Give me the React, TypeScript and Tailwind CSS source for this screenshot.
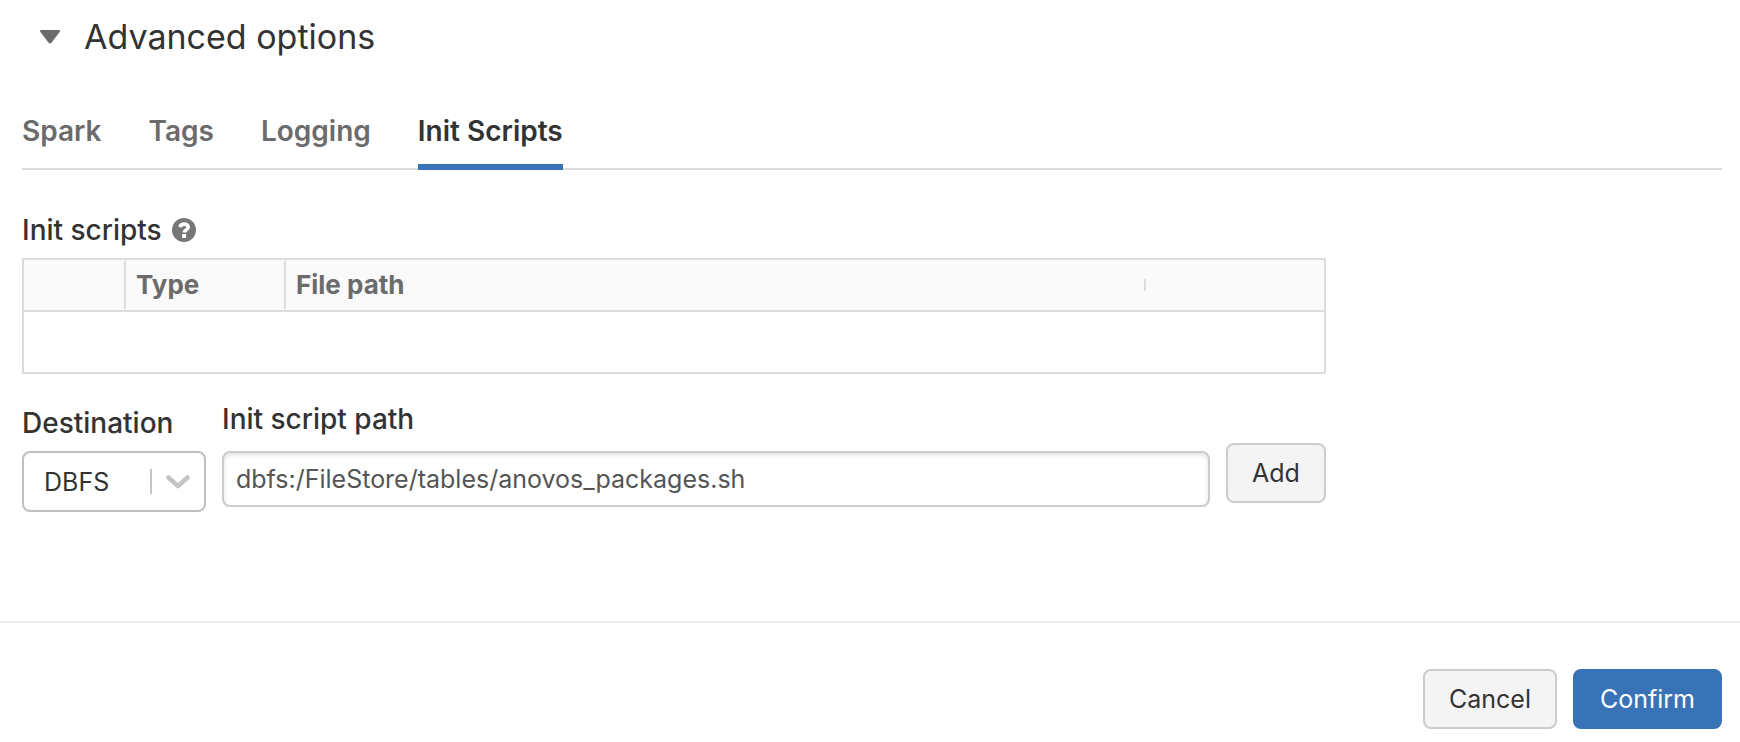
import { useState } from 'react';

const tabs = ['Spark', 'Tags', 'Logging', 'Init Scripts'];

const secondaryButton =
  'h-[60px] rounded-lg border-2 border-[#cccccc] bg-[#f4f4f4] text-[25px] leading-8 text-[#333333]';

function HelpIcon() {
  return (
    <svg viewBox="0 0 24 24" className="size-6" aria-hidden="true">
      <circle cx="12" cy="12" r="12" fill="#777777" />
      <path
        d="M7.800 9C8.600 7.200 10 6.100 12.100 6.100C14.500 6.100 16.200 7.400 16.200 9.200C16.200 11.700 12.500 11.700 12.100 14.600"
        fill="none"
        stroke="#ffffff"
        strokeWidth="3.600"
      />
      <rect x="10.100" y="16" width="4" height="4" fill="#ffffff" />
    </svg>
  );
}

export default function App() {
  const [active, setActive] = useState('Init Scripts');
  const [path, setPath] = useState('dbfs:/FileStore/tables/anovos_packages.sh');

  return (
    <div className="bg-white font-['Inter',sans-serif] text-[#333333]">
      <main className="pr-[18px] pb-[109px] pl-[22px]">
        <h2>
          <button type="button" className="flex items-center gap-6 pt-[17px] pl-[18px] text-[34px] leading-10">
            <svg viewBox="0 0 20 14" className="h-3.5 w-5" aria-hidden="true">
              <path d="M1 0H19Q20.800 .4 19.600 2L11.600 12.500Q10 14.300 8.400 12.500L.4 2Q-.8 .4 1 0Z" fill="#6b6b6b" />
            </svg>
            Advanced options
          </button>
        </h2>

        <div role="tablist" className="mt-[47px] flex gap-[47px] border-b-2 border-[#dddddd]">
          {tabs.map((tab) => (
            <button
              key={tab}
              type="button"
              role="tab"
              aria-selected={tab === active}
              onClick={() => setActive(tab)}
              className={
                tab === active
                  ? '-mb-0.5 h-[66px] border-b-6 border-[#3973b7] pb-1.5 text-[28px] leading-9 font-semibold text-[#333333]'
                  : '-mb-0.5 h-[66px] border-b-6 border-transparent pb-1.5 text-[28px] leading-9 font-semibold text-[#6b6b6b]'
              }
            >
              {tab}
            </button>
          ))}
        </div>

        <section className="max-w-[1304px]">
          <div className="flex items-center gap-2.5 pt-[42px] pb-2.5">
            <h3 className="text-[28px] leading-9 font-medium">Init scripts</h3>
            <HelpIcon />
          </div>

          <table className="w-full table-fixed border-separate border-spacing-0 border-2 border-[#dddddd] text-left text-[26px] leading-8 text-[#6b6b6b]">
            <thead className="bg-[#fafafa]">
              <tr className="h-[52px]">
                <th className="w-[102px] border-b-2 border-[#dddddd] p-0">
                  <div className="h-12 border-r-2 border-[#dddddd]" />
                </th>
                <th className="w-40 border-b-2 border-[#dddddd] p-0">
                  <div className="flex h-12 items-center border-r-2 border-[#dddddd] pl-2.5 font-bold">Type</div>
                </th>
                <th className="border-b-2 border-[#dddddd] p-0">
                  <div className="flex h-12 items-center justify-between pl-2.5 font-bold">
                    File path
                    <span className="h-3 w-0.5 bg-[#dddddd]" />
                  </div>
                </th>
                <th className="w-[178px] border-b-2 border-[#dddddd] p-0" />
              </tr>
            </thead>
            <tbody>
              <tr className="h-[60px]">
                <td colSpan={4} />
              </tr>
            </tbody>
          </table>

          <div className="mt-[27px] flex items-start gap-4">
            <div className="flex w-[184px] flex-col gap-2.5 pt-1">
              <label htmlFor="destination" className="text-[28px] leading-9 font-medium">
                Destination
              </label>
              <div className="relative">
                <select
                  id="destination"
                  className="h-[61px] w-full appearance-none rounded-lg border-2 border-[#c0c0c0] bg-white pl-5 text-[25px] leading-8"
                >
                  <option>DBFS</option>
                </select>
                <div className="pointer-events-none absolute inset-y-0 right-4 flex items-center gap-3.5">
                  <span className="h-[25px] w-0.5 bg-[#c4c4c4]" />
                  <svg viewBox="0 0 24 14" className="h-3.5 w-6" aria-hidden="true">
                    <path
                      d="M2.500 2.500L12 11.200L21.500 2.500"
                      fill="none"
                      stroke="#c4c4c4"
                      strokeWidth="4.500"
                      strokeLinecap="round"
                      strokeLinejoin="round"
                    />
                  </svg>
                </div>
              </div>
            </div>

            <div className="flex min-w-0 flex-1 flex-col gap-3.5">
              <label htmlFor="script-path" className="text-[28px] leading-9 font-medium">
                Init script path
              </label>
              <input
                id="script-path"
                type="text"
                value={path}
                onChange={(event) => setPath(event.target.value)}
                className="h-14 w-full rounded-lg border-2 border-[#cccccc] bg-white px-3 text-[25px] leading-8 text-[#555555] shadow-[inset_0_2px_4px_rgba(0,0,0,0.12)]"
              />
            </div>

            <div className="w-[100px] pt-[42px]">
              <button type="button" className={`${secondaryButton} w-full`}>
                Add
              </button>
            </div>
          </div>
        </section>
      </main>

      <footer className="flex justify-end gap-4 border-t-2 border-[#eeeeee] pt-[46px] pr-[18px] pb-3.5">
        <button type="button" className={`${secondaryButton} px-6`}>
          Cancel
        </button>
        <button
          type="button"
          className="h-[60px] rounded-lg border-2 border-[#3973b7] bg-[#3973b7] px-[25px] text-[25px] leading-8 text-white"
        >
          Confirm
        </button>
      </footer>
    </div>
  );
}
